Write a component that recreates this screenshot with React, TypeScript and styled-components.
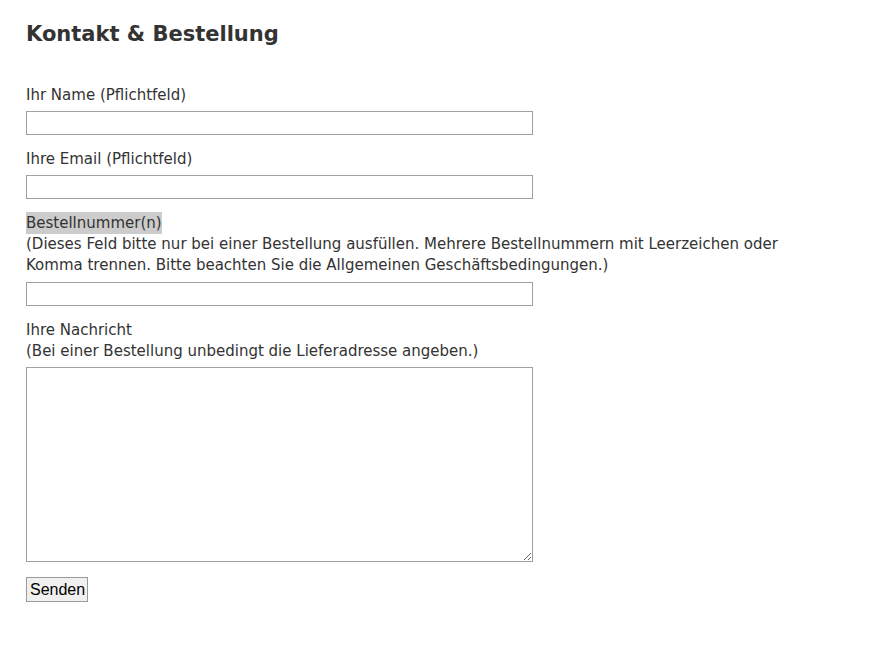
import { createGlobalStyle } from "styled-components";
import styled from "styled-components";

const GlobalStyle = createGlobalStyle`
  html, body {
    margin: 0;
    padding: 0;
    background: #fff;
  }
  body {
    font-family: "DejaVu Sans", Verdana, sans-serif;
    color: #333;
  }
`

const Page = styled.div`
  padding: 20px 26px;
  width: 790px;
`

const Title = styled.h2`
  font-size: 21px;
  font-weight: bold;
  line-height: 28px;
  margin: 0 0 36px 0;
`

const Form = styled.form`
  display: flex;
  flex-direction: column;
  font-size: 15px;
  line-height: 22px;
`

const Field = styled.div`
  display: flex;
  flex-direction: column;
  align-items: flex-start;
  margin-bottom: 13px;
`

const Label = styled.span<{ $marked?: boolean }>`
  background: ${(p) => (p.$marked ? "#cccccc" : "transparent")};
`

const Hint = styled.span`
  display: block;
  line-height: 21.3px;
`

const TextInput = styled.input`
  box-sizing: border-box;
  width: 507px;
  height: 24px;
  margin: 5px 0 0 0;
  border: 1px solid #a0a0a0;
  padding: 2px 4px;
  font: inherit;
  background: #fff;
`

const Message = styled.textarea`
  box-sizing: border-box;
  width: 507px;
  height: 195px;
  margin: 5px 0 0 0;
  border: 1px solid #a0a0a0;
  padding: 2px 4px;
  font: inherit;
  background: #fff;
`

const SubmitButton = styled.button`
  align-self: flex-start;
  font-family: "Liberation Sans", Arial, sans-serif;
  font-size: 16px;
  line-height: 19px;
  color: #000;
  background: #f0f0f0;
  border: 1px solid #9a9a9a;
  padding: 2px 2px 2px 3px;
  margin-top: 2px;
`

export default function App() {
  return (
    <>
      <GlobalStyle />
      <Page>
        <Title>Kontakt &amp; Bestellung</Title>
        <Form onSubmit={(e) => e.preventDefault()}>
          <Field>
            <Label>Ihr Name (Pflichtfeld)</Label>
            <TextInput type="text" />
          </Field>
          <Field>
            <Label>Ihre Email (Pflichtfeld)</Label>
            <TextInput type="email" />
          </Field>
          <Field>
            <Label $marked>Bestellnummer(n)</Label>
            <Hint>
              (Dieses Feld bitte nur bei einer Bestellung ausfüllen. Mehrere Bestellnummern mit Leerzeichen oder Komma trennen. Bitte beachten Sie die Allgemeinen Geschäftsbedingungen.)
            </Hint>
            <TextInput type="text" />
          </Field>
          <Field>
            <Label>Ihre Nachricht</Label>
            <Hint>(Bei einer Bestellung unbedingt die Lieferadresse angeben.)</Hint>
            <Message />
          </Field>
          <SubmitButton type="submit">Senden</SubmitButton>
        </Form>
      </Page>
    </>
  )
}
